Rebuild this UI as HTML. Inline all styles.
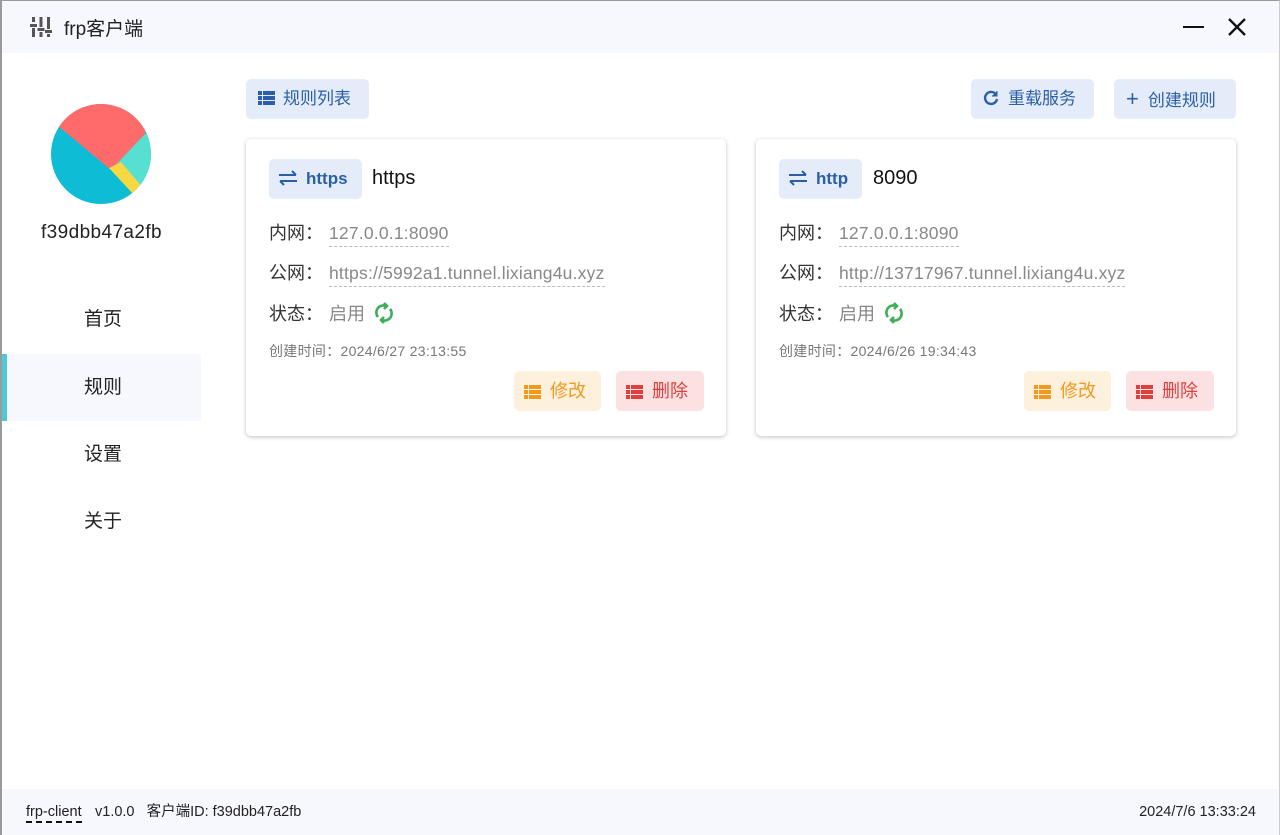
<!DOCTYPE html>
<html><head><meta charset="utf-8"><style>
*{box-sizing:border-box;margin:0;padding:0}
body{width:1280px;height:835px;overflow:hidden;background:#fff;font-family:"Liberation Sans","Noto Sans CJK SC",sans-serif;color:#222;position:relative}
.frame{position:absolute;inset:0;border-left:2px solid #9a9a9a;border-top:1px solid #9a9a9a;border-right:1px solid #ccc}
.hdr{position:absolute;left:2px;top:1px;right:0;height:52px;background:#f7f8fd}
.title{position:absolute;left:62px;top:13px;font-size:19px;color:#222}
.av{position:absolute;left:51px;top:104px;width:100px;height:100px;border-radius:50%;overflow:hidden}
.uname{position:absolute;left:0;width:203px;top:222px;text-align:center;font-size:19px;color:#222;letter-spacing:.4px}
.nav{position:absolute;left:2px;width:199px;height:67px;line-height:67px;padding-left:82px;font-size:19px;color:#222}
.nav.act{background:#f7f8fd;border-left:5px solid #4fc9d6;padding-left:77px}
.btn{position:absolute;top:79px;height:40px;background:#e3ecf8;border-radius:5px;color:#2c5fa8;font-size:17px;line-height:40px;padding-left:12px}
.card{position:absolute;top:139px;width:480px;height:297px;background:#fff;border-radius:5px;box-shadow:0 1px 4px rgba(0,0,0,.25)}
.tag{position:absolute;left:23px;top:20px;height:40px;background:#e3ecf8;border-radius:5px;color:#2c5fa8;font-size:17px;font-weight:bold;line-height:40px;padding-left:9px}
.name{position:absolute;top:28px;font-size:20px;color:#111}
.row{position:absolute;left:23px;font-size:18px;color:#333;white-space:nowrap}
.row .l{display:inline-block;width:60px}
.row .v{color:#888;border-bottom:1px dashed #bbb;padding-bottom:3px;font-size:17.5px;letter-spacing:.2px}
.ct{position:absolute;left:23px;top:202px;font-size:14px;color:#777;letter-spacing:.3px}
.ab{position:absolute;top:232px;height:40px;border-radius:5px;font-size:18px;line-height:40px;padding-left:10px}
.ab svg{vertical-align:-2px;margin-right:9px}
.foot{position:absolute;left:2px;right:0;top:789px;bottom:0;background:#f7f8fd;font-size:14.5px;color:#222}
</style></head><body>
<div class="hdr">
<svg style="position:absolute;left:28px;top:15px" width="22" height="22" viewBox="0 0 22 22" fill="#555"><rect x="2" y="1" width="3" height="5"/><rect x="0" y="8" width="7" height="3"/><rect x="2" y="12" width="3" height="9"/><rect x="9.5" y="1" width="3" height="10"/><rect x="7.5" y="12" width="7" height="3"/><rect x="9.5" y="16" width="3" height="5"/><rect x="17" y="1" width="3" height="12"/><rect x="15" y="14" width="7" height="3"/><rect x="17" y="18" width="3" height="3"/></svg>
<div class="title">frp客户端</div>
<div style="position:absolute;left:1181px;top:25px;width:21px;height:2px;background:#111"></div>
<svg style="position:absolute;left:1226px;top:17px" width="18" height="18" viewBox="0 0 18 18" stroke="#111" stroke-width="2.3"><path d="M1 1L17 17M17 1L1 17"/></svg>
</div>
<div class="av"><svg width="100" height="100" viewBox="0 0 100 100"><rect width="100" height="100" fill="#0fbcd5"/><polygon points="0,-5 100,-5 94,30 60,66 0,16" fill="#ff6b6b"/><polygon points="94,30 110,30 110,100 88,92 60,66" fill="#56e0d2"/><polygon points="58,64 70,58 92,84 84,92" fill="#f7d843"/></svg></div>
<div class="uname">f39dbb47a2fb</div>
<div class="nav" style="top:286px">首页</div>
<div class="nav act" style="top:354px">规则</div>
<div class="nav" style="top:421px">设置</div>
<div class="nav" style="top:488px">关于</div>

<div class="btn" style="left:246px;width:123px"><svg width="17" height="14" viewBox="0 0 17 14" fill="#2c5fa8" style="vertical-align:-1px;margin-right:8px"><rect width="4" height="4"/><rect x="5" width="12" height="4"/><rect y="5" width="4" height="4"/><rect x="5" y="5" width="12" height="4"/><rect y="10" width="4" height="4"/><rect x="5" y="10" width="12" height="4"/></svg>规则列表</div>
<div class="btn" style="left:971px;width:123px"><svg width="16" height="16" viewBox="0 0 16 16" fill="none" stroke="#2c5fa8" stroke-width="2.4" style="vertical-align:-2px;margin-right:9px"><path d="M13 4.5A6 6 0 1 0 14 9"/><path d="M14 1v5h-5" fill="#2c5fa8" stroke-width="1"/></svg>重载服务</div>
<div class="btn" style="left:1114px;width:122px"><span style="font-size:22px;margin-right:9px;font-weight:300">+</span>创建规则</div>

<div class="card" style="left:246px">
<div class="tag" style="width:93px"><svg width="20" height="16" viewBox="0 0 20 16" fill="none" stroke="#2c5fa8" stroke-width="2" style="vertical-align:-2px;margin-right:8px"><path d="M1 5h17M14 1l4 4M19 11H2M6 15l-4-4"/></svg>https</div>
<div class="name" style="left:126px">https</div>
<div class="row" style="top:80px"><span class="l">内网：</span><span class="v">127.0.0.1:8090</span></div>
<div class="row" style="top:120px"><span class="l">公网：</span><span class="v">https://5992a1.tunnel.lixiang4u.xyz</span></div>
<div class="row" style="top:161px"><span class="l">状态：</span><span style="color:#888">启用</span> <svg width="20" height="22" viewBox="0 0 20 22" fill="none" stroke="#3fae5a" stroke-width="2.6" style="vertical-align:-4px;margin-left:4px"><path d="M4 15A7 7 0 0 1 12 4"/><path d="M10 1l3 3-3 3"/><path d="M16 7A7 7 0 0 1 8 18"/><path d="M10 21l-3-3 3-3"/></svg></div>
<div class="ct">创建时间：2024/6/27 23:13:55</div>
<div class="ab" style="left:268px;width:87px;background:#fdf0dc;color:#f29a1f"><svg width="17" height="14" viewBox="0 0 17 14" fill="#f29a1f"><rect width="4" height="4"/><rect x="5" width="12" height="4"/><rect y="5" width="4" height="4"/><rect x="5" y="5" width="12" height="4"/><rect y="10" width="4" height="4"/><rect x="5" y="10" width="12" height="4"/></svg>修改</div>
<div class="ab" style="left:370px;width:88px;background:#fbe1e1;color:#e0403d"><svg width="17" height="14" viewBox="0 0 17 14" fill="#e0403d"><rect width="4" height="4"/><rect x="5" width="12" height="4"/><rect y="5" width="4" height="4"/><rect x="5" y="5" width="12" height="4"/><rect y="10" width="4" height="4"/><rect x="5" y="10" width="12" height="4"/></svg>删除</div>
</div>
<div class="card" style="left:756px">
<div class="tag" style="width:83px"><svg width="20" height="16" viewBox="0 0 20 16" fill="none" stroke="#2c5fa8" stroke-width="2" style="vertical-align:-2px;margin-right:8px"><path d="M1 5h17M14 1l4 4M19 11H2M6 15l-4-4"/></svg>http</div>
<div class="name" style="left:117px">8090</div>
<div class="row" style="top:80px"><span class="l">内网：</span><span class="v">127.0.0.1:8090</span></div>
<div class="row" style="top:120px"><span class="l">公网：</span><span class="v">http://13717967.tunnel.lixiang4u.xyz</span></div>
<div class="row" style="top:161px"><span class="l">状态：</span><span style="color:#888">启用</span> <svg width="20" height="22" viewBox="0 0 20 22" fill="none" stroke="#3fae5a" stroke-width="2.6" style="vertical-align:-4px;margin-left:4px"><path d="M4 15A7 7 0 0 1 12 4"/><path d="M10 1l3 3-3 3"/><path d="M16 7A7 7 0 0 1 8 18"/><path d="M10 21l-3-3 3-3"/></svg></div>
<div class="ct">创建时间：2024/6/26 19:34:43</div>
<div class="ab" style="left:268px;width:87px;background:#fdf0dc;color:#f29a1f"><svg width="17" height="14" viewBox="0 0 17 14" fill="#f29a1f"><rect width="4" height="4"/><rect x="5" width="12" height="4"/><rect y="5" width="4" height="4"/><rect x="5" y="5" width="12" height="4"/><rect y="10" width="4" height="4"/><rect x="5" y="10" width="12" height="4"/></svg>修改</div>
<div class="ab" style="left:370px;width:88px;background:#fbe1e1;color:#e0403d"><svg width="17" height="14" viewBox="0 0 17 14" fill="#e0403d"><rect width="4" height="4"/><rect x="5" width="12" height="4"/><rect y="5" width="4" height="4"/><rect x="5" y="5" width="12" height="4"/><rect y="10" width="4" height="4"/><rect x="5" y="10" width="12" height="4"/></svg>删除</div>
</div>

<div class="foot">
<span style="position:absolute;left:24px;top:15px;border-bottom:2px dashed #111;line-height:17px">frp-client</span>
<span style="position:absolute;left:93px;top:15px;line-height:17px">v1.0.0 &nbsp; 客户端ID: f39dbb47a2fb</span>
<span style="position:absolute;right:24px;top:15px;line-height:17px">2024/7/6 13:33:24</span>
</div>
<div class="frame"></div>
</body></html>
